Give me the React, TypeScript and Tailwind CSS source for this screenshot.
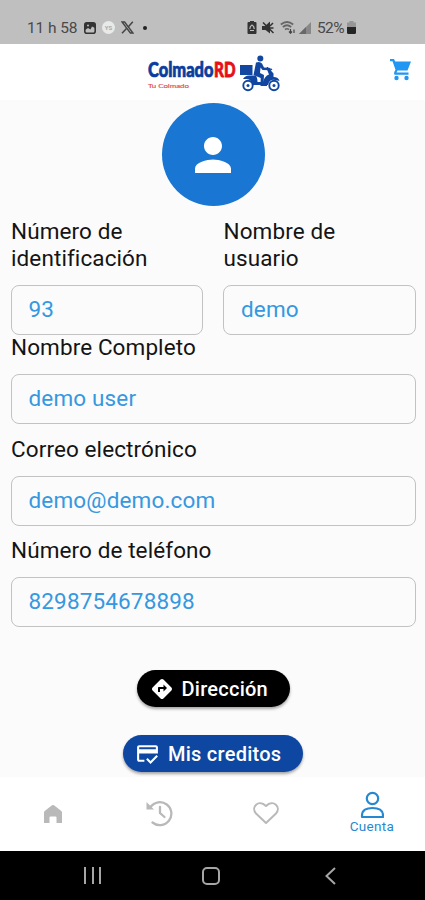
import type { ReactNode } from 'react';
import { MdCreditScore, MdDirections, MdPerson } from 'react-icons/md';

function StatusBar() {
    return (
        <div className="flex h-11 items-center justify-between bg-[#bfbfbf] pl-[27px] pr-[69px] pt-[11px] text-[#494949]">
            <div className="flex items-center">
                <span className="w-[50px] whitespace-nowrap text-[15.5px] leading-4 tracking-[-0.1px]">11 h 58</span>
                <svg className="ml-[7px]" width="12" height="12" viewBox="0 0 12 12">
                    <rect x="0.8" y="0.8" width="10.4" height="10.4" rx="2" fill="none" stroke="#333" strokeWidth="1.6" />
                    <path d="M1 1h10v5L8 4.5 6.5 7.5 4 6 1 8z" fill="#333" />
                    <circle cx="4" cy="3.6" r="1" fill="#bfbfbf" />
                </svg>
                <span className="ml-[6px] flex size-[13px] items-center justify-center rounded-full bg-[#e9e9e9] text-[6px] font-bold text-[#aaa]">YS</span>
                <svg className="ml-[6px]" width="13" height="13" viewBox="0 0 13 13" fill="none" stroke="#444">
                    <path d="M1 1h2.6L12 12H9.4z" strokeWidth="1.4" />
                    <path d="M11.8.8 7.4 5.7M5.5 7.6 1 12.3" strokeWidth="1.5" />
                </svg>
                <span className="ml-[9px] size-[4px] rounded-full bg-[#222]" />
            </div>
            <div className="flex items-center">
                <svg width="10" height="13" viewBox="0 0 9 13">
                    <path d="M2.5 0h4v1H8q1 0 1 1v10q0 1-1 1H1q-1 0-1-1V2q0-1 1-1h1.5z" fill="#333" />
                    <path d="M2.3 8q0-3 2.2-4Q6.700 5 6.700 8M2.500 9.500h4" stroke="#bfbfbf" strokeWidth="1.2" fill="none" />
                </svg>
                <svg className="ml-[5px]" width="13" height="13" viewBox="0 0 13 13">
                    <path d="M0 5h3l5-4.500v12L3.500 9H0z" fill="#333" />
                    <path d="M1 1.500 11.500 12M8 5l3-3M8 7h3.500" stroke="#333" strokeWidth="1.5" />
                </svg>
                <svg className="ml-[5px]" width="16" height="13" viewBox="0 0 16 13" fill="none" stroke="#666">
                    <path d="M.8 3.500Q7-1.500 13.200 3.500M2.800 6Q7 2.500 11.200 6M5 8.500Q7 7 9 8.500" strokeWidth="1.7" />
                    <path d="M10.500 8v4M9 10.500l1.500 1.700 1.500-1.700M14 12V8.500" stroke="#444" strokeWidth="1.2" />
                </svg>
                <svg className="ml-[3px]" width="12" height="12" viewBox="0 0 12 12">
                    <path d="M0 12 12 0v12z" fill="#888" />
                    <path d="M0 12l7-7v7z" fill="#686868" />
                </svg>
                <span className="ml-[6px] w-[29px] whitespace-nowrap text-[15.5px] leading-4 tracking-[-0.6px]">52%</span>
                <svg className="ml-[1px]" width="9" height="13" viewBox="0 0 9 13">
                    <path d="M2.500 0h4v1.500H9V6H0V1.500h2.500z" fill="#969696" />
                    <path d="M0 6h9v5.500q0 1.500-1.500 1.500h-6Q0 13 0 11.500z" fill="#252525" />
                </svg>
            </div>
        </div>
    );
}

function Logo() {
    return (
        <svg width="136" height="40" viewBox="0 0 136 40" className="font-[Lato,sans-serif]">
            <text x="1" y="25" fontSize="20.5" fontWeight="900" fill="#0b3d9e" stroke="#0b3d9e" strokeWidth="0.7" strokeLinejoin="round" textLength="65.5" lengthAdjust="spacingAndGlyphs">Colmado</text>
            <text x="67" y="24.5" fontSize="20.5" fontWeight="900" fill="#e60f18" stroke="#e60f18" strokeWidth="0.8" strokeLinejoin="round" textLength="21.5" lengthAdjust="spacingAndGlyphs">RD</text>
            <text x="1" y="35.5" fontSize="6.5" fontWeight="400" fill="#e2545a" stroke="#e2545a" strokeWidth="0.2" textLength="41" lengthAdjust="spacingAndGlyphs">Tu Colmado</text>
            {/* Delivery rider */}
            <g fill="#1147a0">
                <rect x="93" y="13" width="12.500" height="10" />
                <circle cx="113.300" cy="6.500" r="3" />
                <path d="M109 10.500q4-1.500 6 1l2 4 6.500.5v2.200l-8-.3-2-2.400-.5 5.500 4 2-.5 9h3.500V34h-6.500l.2-8-7.200-3z" />
                <path d="M96 27q2-3.500 6-3.500h6.500q2 1.500 2 6.500h5.500q1.500-6 6-7.500l-2-5h3l3.500 4v3.500q5 0 6 4l-3-.7q-7-2-8.500 4.700h-16q-.5-5.500-5-6z" />
                <path d="M120.500 17.500V15M122 19l3-2" stroke="#1147a0" strokeWidth="1.5" />
            </g>
            <g fill="#fff" stroke="#1147a0" strokeWidth="1.9">
                <circle cx="101" cy="33.500" r="4.700" />
                <circle cx="127" cy="33.500" r="4.700" />
            </g>
            <g fill="#1147a0">
                <circle cx="101" cy="33.500" r="1.500" />
                <circle cx="127" cy="33.500" r="1.500" />
            </g>
        </svg>
    );
}

function Header() {
    return (
        <header className="flex h-14 items-start bg-white pl-[147px] pr-[13px] pt-[8px]">
            <Logo />
            <svg className="ml-auto mt-[6px]" width="23" height="23" viewBox="0 0 23 23" fill="#2196f3">
                <path d="M1 1h4l1.200 2.500H22L18.500 12.500H8.500L7.500 14.500H19.500V16.700H5.500Q4.500 15.500 5.500 13.500L6.500 11.700 3.500 3.200H1z" />
                <circle cx="7.500" cy="20" r="2.200" />
                <circle cx="17.500" cy="20" r="2.200" />
            </svg>
        </header>
    );
}

function Field({ label, value, className = '' }: { label: string; value: string; className?: string }) {
    return (
        <div className={className}>
            <div className="pl-[0.5px] text-[22.5px] leading-[27px] tracking-[0.1px] text-[#141414]">{label}</div>
            <div className="mt-[13px] flex h-[50px] items-center rounded-[8px] border-[1.5px] border-[#c2c2c2] pl-[17px] text-[22.5px] tracking-[0.15px] text-[#3598e0]">
                {value}
            </div>
        </div>
    );
}

function PillButton({ icon, label, className }: { icon: ReactNode; label: string; className: string }) {
    return (
        <button className={`flex h-[37px] items-center rounded-full text-[20px] font-medium tracking-[0.25px] text-white shadow-[0_2px_3px_rgba(0,0,0,0.35)] ${className}`}>
            {icon}
            <span className="whitespace-nowrap">{label}</span>
        </button>
    );
}

function TabBar() {
    return (
        <nav className="grid h-[74px] grid-cols-4 bg-white text-[#b9b9b9]">
            <div className="flex items-center justify-center">
                <svg width="20" height="20" viewBox="0 0 20 20" fill="currentColor">
                    <path d="M1 8.500Q1 7.500 2 6.700L9 1.300q1-.8 2 0l7 5.400q1 .8 1 1.800V19h-5.500v-5.500q0-1-1-1h-5q-1 0-1 1V19H1z" />
                </svg>
            </div>
            <div className="flex items-center justify-center pb-[2px]">
                <svg width="28" height="28" viewBox="0 0 28 28" fill="none" stroke="currentColor" strokeWidth="2.3">
                    <path d="M5.500 8A11.500 11.500 0 1 1 7.500 23.500" strokeLinecap="round" />
                    <path d="M1.500 3v7.500H9z" fill="currentColor" stroke="none" />
                    <path d="M15 8v6l4.500 4" strokeLinecap="round" />
                </svg>
            </div>
            <div className="flex items-center justify-center pb-[2px]">
                <svg width="28" height="24" viewBox="0 0 28 24" fill="none" stroke="currentColor" strokeWidth="2">
                    <path d="M14 22 4 12.500C-1.500 6 6.500-2 14 5c7.500-7 15.500 1 10 7.500z" strokeLinejoin="round" />
                </svg>
            </div>
            <div className="flex flex-col items-center pt-[14px] text-[#2589d2]">
                <svg width="24" height="28" viewBox="0 0 24 28" fill="none" stroke="currentColor" strokeWidth="2.2">
                    <circle cx="12.500" cy="7.500" r="5.700" />
                    <path d="M2 26v-1.500C2 19 6.500 17 12.500 17S23 19 23 24.500V26z" strokeLinejoin="round" />
                </svg>
                <span className="text-[13.5px] leading-[15px] tracking-[0.3px]">Cuenta</span>
            </div>
        </nav>
    );
}

function SystemNav() {
    return (
        <div className="flex h-[49px] items-center bg-black text-[#a6a6a6]">
            <div className="ml-[84px] flex w-[17px] justify-between">
                <span className="h-[17px] w-[2px] bg-current" />
                <span className="h-[17px] w-[2px] bg-current" />
                <span className="h-[17px] w-[2px] bg-current" />
            </div>
            <span className="ml-[101px] size-[18px] rounded-[5px] border-2 border-current" />
            <svg className="ml-[105px]" width="11" height="18" viewBox="0 0 11 18" fill="none" stroke="currentColor" strokeWidth="2">
                <path d="M10 1 1.500 9l8.500 8" />
            </svg>
        </div>
    );
}

export default function App() {
    return (
        <div className="flex h-[900px] w-[425px] flex-col overflow-hidden bg-[#fbfbfb] font-[Roboto,sans-serif]">
            <StatusBar />
            <Header />
            <main className="flex flex-1 flex-col pl-[10.5px] pr-[9.5px] pt-[3px]">
                <div className="flex size-[103px] items-center justify-center self-center rounded-full bg-[#1976d2] text-white">
                    <MdPerson size={54} />
                </div>
                <div className="mt-[12px] flex gap-[20px]">
                    <Field label="Número de identificación" value="93" className="w-[192.5px]" />
                    <Field label="Nombre de usuario" value="demo" className="w-[192.5px]" />
                </div>
                <Field label="Nombre Completo" value="demo user" className="-mt-px" />
                <Field label="Correo electrónico" value="demo@demo.com" className="mt-[11.5px]" />
                <Field label="Número de teléfono" value="8298754678898" className="mt-[11.5px]" />
                <div className="mt-[43px] flex flex-col items-center gap-[28px]">
                    <PillButton icon={<MdDirections size={24} className="mr-[8px]" />} label="Dirección" className="w-[153px] bg-black pl-[13px]" />
                    <PillButton icon={<MdCreditScore size={25} className="mr-[8px]" />} label="Mis creditos" className="w-[180px] bg-[#0d47a1] pl-[12px]" />
                </div>
            </main>
            <TabBar />
            <SystemNav />
        </div>
    );
}
